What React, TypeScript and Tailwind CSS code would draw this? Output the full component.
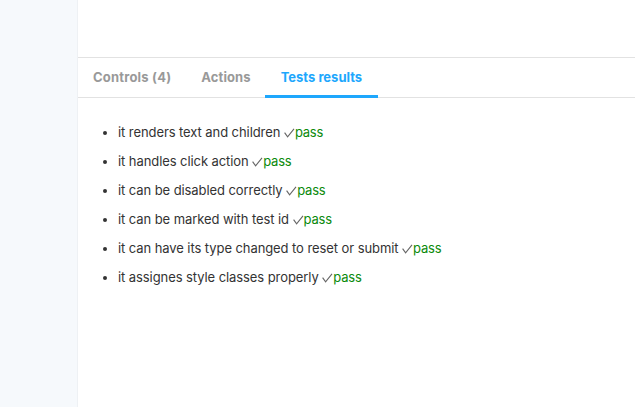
import React from "react";

const tests = [
  "it renders text and children",
  "it handles click action",
  "it can be disabled correctly",
  "it can be marked with test id",
  "it can have its type changed to reset or submit",
  "it assignes style classes properly",
];

function Check() {
  return (
    <svg
      width="11"
      height="10"
      viewBox="0 0 11 10"
      className="inline-block align-[-1px]"
      fill="none"
    >
      <path d="M0.6 4.6 L3.6 8.8 L10 0.8" stroke="#666666" strokeWidth="1.1" />
    </svg>
  );
}

export default function App() {
  return (
    <div
      className="flex h-[407px] w-[635px] overflow-hidden bg-white"
      style={{ fontFamily: "Inter, 'Open Sans', sans-serif" }}
    >
      <div className="w-[78px] shrink-0 border-r border-[#eef1f4] bg-[#f6f9fc]" />
      <div className="flex min-w-0 flex-1 flex-col">
        <div className="h-[58px] shrink-0 border-b border-[#e2e2e2]" />
        <div className="flex h-[40px] shrink-0 items-stretch border-b border-[#e2e2e2] pl-[1px]">
          <div className="flex items-center px-[14px] text-[13px] font-bold tracking-[0.2px] text-[#999999]">
            Controls (4)
          </div>
          <div className="flex items-center pl-[16px] pr-[14px] text-[13px] font-bold tracking-[0.1px] text-[#999999]">
            Actions
          </div>
          <div className="relative flex items-center px-[16px] text-[13px] font-bold text-[#1ea7fd]">
            Tests results
            <div className="absolute bottom-[-1px] left-0 right-0 h-[3px] bg-[#1ea7fd]" />
          </div>
        </div>
        <ul className="list-disc pl-[40px] pt-[24px] text-[13px] leading-[20px] tracking-[-0.08px] text-[#333333]">
          {tests.map((t) => (
            <li key={t} className="mb-[9px] h-[20px]">
              {t} <Check />
              <span className="tracking-[-0.2px] text-[#0b8a0b]">pass</span>
            </li>
          ))}
        </ul>
      </div>
    </div>
  );
}
